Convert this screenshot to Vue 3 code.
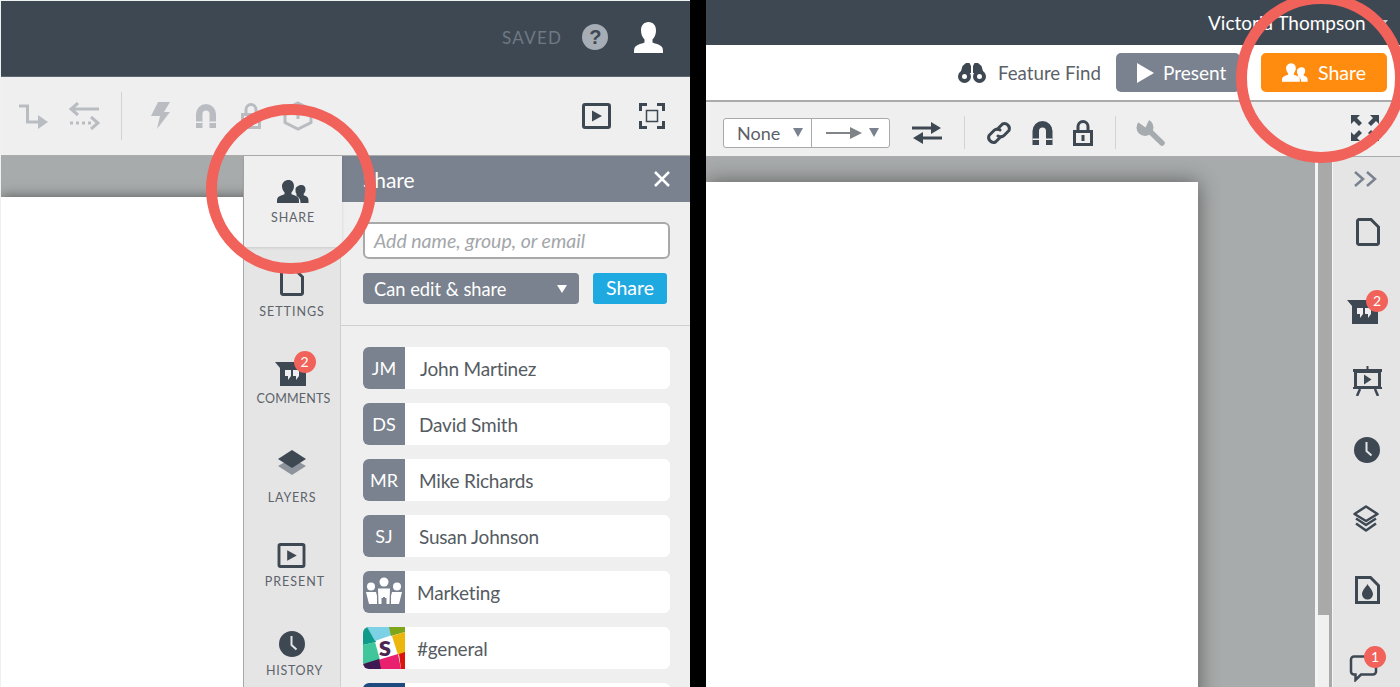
<script setup>
const tabs = [
  { key: 'settings', label: 'SETTINGS', icon: 'i-doc' },
  { key: 'comments', label: 'COMMENTS', icon: 'i-comment', badge: '2' },
  { key: 'layers', label: 'LAYERS', icon: 'i-layers-solid' },
  { key: 'present', label: 'PRESENT', icon: 'i-present' },
  { key: 'history', label: 'HISTORY', icon: 'i-clock' },
]
const people = [
  { kind: 'text', tag: 'JM', name: 'John Martinez', wide: true },
  { kind: 'text', tag: 'DS', name: 'David Smith' },
  { kind: 'text', tag: 'MR', name: 'Mike Richards' },
  { kind: 'text', tag: 'SJ', name: 'Susan Johnson' },
  { kind: 'team', name: 'Marketing' },
  { kind: 'slack', name: '#general' },
  { kind: 'blue', name: '' },
]
</script>

<template>
  <div class="root">
    <svg class="defs" aria-hidden="true">
      <symbol id="i-magnet" viewBox="0 0 20 24">
        <path d="M0 10a10 10 0 0 1 20 0v14h-6.500V10a3.500 3.500 0 0 0-7 0v14H0z" fill="currentColor"/>
        <path d="M0 17.500h6.500v1.500H0zM13.500 17.500H20v1.500h-6.500z" fill="#efefef"/>
      </symbol>
      <symbol id="i-lock" viewBox="0 0 20 26">
        <path d="M5 11V6.500a5 5 0 0 1 10 0V11" fill="none" stroke="currentColor" stroke-width="3"/>
        <rect x="1.500" y="11.500" width="17" height="13" fill="none" stroke="currentColor" stroke-width="3"/>
        <rect x="8.500" y="15" width="3" height="6" fill="currentColor"/>
      </symbol>
      <symbol id="i-present" viewBox="0 0 29 26">
        <rect x="1.500" y="1.500" width="26" height="23" rx="1.500" fill="none" stroke="currentColor" stroke-width="3"/>
        <path d="M10 7.500 20 13 10 18.500z" fill="currentColor"/>
      </symbol>
      <symbol id="i-clock" viewBox="0 0 26 26">
        <circle cx="13" cy="13" r="13" fill="currentColor"/>
        <path d="M12.500 5v9l5 4.500" fill="none" stroke="#e5e5e5" stroke-width="2"/>
      </symbol>
      <symbol id="i-doc" viewBox="0 0 24 28">
        <path d="M3 1.500h12l7.500 7.500v16a1.500 1.500 0 0 1-1.500 1.500H3A1.500 1.500 0 0 1 1.500 25V3A1.500 1.500 0 0 1 3 1.500z" fill="none" stroke="currentColor" stroke-width="3"/>
      </symbol>
      <symbol id="i-comment" viewBox="0 0 31 24">
        <path d="M0 0h31v24H5V6z" fill="currentColor"/>
        <path d="M10 8h6v6l-3 4v-4h-3zM18 8h6v6l-3 4v-4h-3z" fill="#efefef"/>
      </symbol>
      <symbol id="i-layers-solid" viewBox="0 0 28 25">
        <path d="M14 8 28 16 14 25 0 16z" fill="#8d949c"/>
        <path d="M14 0 28 9 14 18 0 9z" fill="currentColor"/>
      </symbol>
      <symbol id="i-people" viewBox="0 0 32 23">
        <path d="M11.500 0c3.600 0 5.500 2.700 5.500 6 0 2.800-1.200 5-2.500 6.300v2c2.500 1 6 2 7 3.700.5 1 .5 3 .5 5H0c0-2 0-4 .5-5 1-1.700 4.500-2.700 7-3.700v-2C6.200 11 5 8.800 5 6c0-3.300 2.900-6 6.500-6z" fill="currentColor"/>
        <path d="M24.500 5c2.500 0 4 1.900 4 4.300 0 2-.8 3.500-1.800 4.500v1.500c1.700.7 3.500 1.300 4.300 2.700.5.900.5 3 .5 5H23.500c0-3-.5-5-4-7V13.800c-1-1-1-2.500-1-4.500C18.500 6.900 22 5 24.500 5z" fill="currentColor"/>
      </symbol>
    </svg>

    <section class="pane pane-left">
      <header class="top-left">
        <span class="saved">SAVED</span>
        <span class="help">?</span>
        <svg class="user" viewBox="0 0 29 31"><path d="M14.500 0c4.600 0 7.500 3.500 7.500 8.500 0 3.800-1.500 7-3.500 9v3c3 1.300 7.500 2 9.500 4.500 1 1.200 1 4 1 6H0c0-2 0-4.800 1-6 2-2.500 6.500-3.200 9.500-4.500v-3c-2-2-3.500-5.200-3.500-9C7 3.500 9.900 0 14.500 0z" fill="#fff"/></svg>
      </header>

      <div class="tools-left">
        <svg class="ic t-route" viewBox="0 0 30 26"><path d="M1 3h8.500v16H21" fill="none" stroke="currentColor" stroke-width="3"/><path d="M20 12l10 7-10 7z" fill="currentColor"/></svg>
        <svg class="ic t-swap" viewBox="0 0 32 28"><path d="M31 7H3M10 1 3 7l7 6" fill="none" stroke="currentColor" stroke-width="3"/><path d="M2 21h22" fill="none" stroke="currentColor" stroke-width="3" stroke-dasharray="3 3"/><path d="M23 15l7 6-7 6" fill="none" stroke="currentColor" stroke-width="3"/></svg>
        <span class="sep s-left"></span>
        <svg class="ic t-bolt" viewBox="0 0 19 27"><path d="M7 0h12l-6 10h6L6 27l3-13H0z" fill="currentColor"/></svg>
        <svg class="ic t-mag"><use href="#i-magnet"/></svg>
        <svg class="ic t-lock"><use href="#i-lock"/></svg>
        <svg class="ic t-hex" viewBox="0 0 30 30"><path d="M15 2 28 8.500v13L15 28 2 21.500v-13z" fill="none" stroke="currentColor" stroke-width="3"/><path d="M15 8v10" stroke="currentColor" stroke-width="3"/></svg>
        <span class="spring"></span>
        <svg class="ic t-play"><use href="#i-present"/></svg>
        <svg class="ic t-focus" viewBox="0 0 26 26"><path d="M1.500 8V1.500H8M18 1.500h6.500V8M24.500 18v6.500H18M8 24.500H1.500V18" fill="none" stroke="currentColor" stroke-width="3"/><rect x="7.500" y="7.500" width="11" height="11" fill="none" stroke="currentColor" stroke-width="1.500"/></svg>
      </div>

      <div class="work-left">
        <div class="canvas-left">
          <div class="page-left"></div>
        </div>

        <nav class="side">
          <div class="tab tab-share">
            <svg class="tab-ic ic-people"><use href="#i-people"/></svg>
            <span class="tab-label">SHARE</span>
          </div>
          <div v-for="t in tabs" :key="t.key" class="tab" :class="'tab-' + t.key">
            <span class="tab-ic-wrap">
              <svg class="tab-ic"><use :href="'#' + t.icon"/></svg>
              <span v-if="t.badge" class="badge">{{ t.badge }}</span>
            </span>
            <span class="tab-label">{{ t.label }}</span>
          </div>
        </nav>

        <aside class="panel">
          <div class="panel-head">
            <span>Share</span>
            <svg class="close" viewBox="0 0 18 18"><path d="M2 2l14 14M16 2 2 16" stroke="#fff" stroke-width="2.500"/></svg>
          </div>
          <div class="form">
            <div class="input">Add name, group, or email</div>
            <div class="form-row">
              <div class="perm"><span>Can edit &amp; share</span><i class="caret-white"></i></div>
              <div class="share-btn">Share</div>
            </div>
          </div>
          <div class="list">
            <div v-for="p in people" :key="p.kind + p.name" class="person">
              <div class="avatar" :class="'av-' + p.kind">
                <template v-if="p.kind === 'text'">{{ p.tag }}</template>
                <svg v-else-if="p.kind === 'team'" class="av-svg" viewBox="0 0 42 42">
                  <g fill="#fff">
                    <circle cx="8" cy="15.500" r="4"/><circle cx="21" cy="11" r="4.500"/><circle cx="34" cy="15.500" r="4"/>
                    <path d="M3 21h10l1 4v8H6zM15 17.500h12l-.5 15.500h-3v-6h-1.500v-1h-2v1h-1.500v6h-3zM29 21h10l-3 12h-8v-8z"/>
                  </g>
                </svg>
                <svg v-else-if="p.kind === 'slack'" class="av-svg" viewBox="0 0 42 42">
                  <rect width="42" height="42" fill="#fff"/>
                  <path d="M0 0h8l5 15L0 18z" fill="#0e9b8a"/>
                  <path d="M4 0h23l2 8-17 6z" fill="#7cd2e4"/>
                  <path d="M26 0h16v5l-14 4z" fill="#7ea51a"/>
                  <path d="M29 9 42 5v21l-7 2z" fill="#ecb60c"/>
                  <path d="M0 18l12-3 5 18L0 37z" fill="#41c69b"/>
                  <path d="M15 33l20-6 3 15H17z" fill="#e8206d"/>
                  <path d="M36 27l6-2v17h-4z" fill="#d9150d"/>
                  <path d="M0 37l16-5 2 10H0z" fill="#3e1a52"/>
                  <text x="22" y="29" text-anchor="middle" class="slack-s">s</text>
                </svg>
              </div>
              <span class="person-name" :class="{ 'name-wide': p.wide }">{{ p.name }}</span>
            </div>
          </div>
        </aside>
      </div>
      <div class="ring ring-left"></div>
    </section>

    <div class="gutter"></div>

    <section class="pane pane-right">
      <header class="top-right">
        <span class="account">Victoria Thompson</span>
        <i class="caret-account"></i>
      </header>

      <div class="bar-white">
        <svg class="binoc" viewBox="0 0 28 20"><path d="M8 0h3.500l1.500 3v7H2.500L4.500 3zM16.500 0H20l3.500 3 2 7H15V3z" fill="#3e4853"/><circle cx="6.500" cy="13.500" r="4.500" fill="#fff" stroke="#3e4853" stroke-width="4"/><circle cx="21.500" cy="13.500" r="4.500" fill="#fff" stroke="#3e4853" stroke-width="4"/></svg>
        <span class="feature">Feature Find</span>
        <div class="btn-present">
          <svg class="play" viewBox="0 0 17 20"><path d="M0 0 17 10 0 20z" fill="#fff"/></svg>
          <span>Present</span>
        </div>
        <div class="btn-share">
          <svg class="btn-people"><use href="#i-people"/></svg>
          <span>Share</span>
        </div>
      </div>

      <div class="bar-grey">
        <div class="selects">
          <div class="sel sel-none"><span>None</span><i class="caret-grey"></i></div>
          <div class="sel sel-arrow">
            <svg class="line-arrow" viewBox="0 0 36 12"><path d="M0 6h24" stroke="#808488" stroke-width="2"/><path d="M24 0l12 6-12 6z" fill="#808488"/></svg>
            <i class="caret-grey"></i>
          </div>
        </div>
        <svg class="ic r-swap" viewBox="0 0 30 22"><path d="M0 6h20" stroke="currentColor" stroke-width="3"/><path d="M19 0l10 6-10 6zM11 10 1 16l10 6z" fill="currentColor"/><path d="M10 16h20" stroke="currentColor" stroke-width="3"/></svg>
        <span class="sep s-r1"></span>
        <svg class="ic r-link" viewBox="0 0 26 26"><path d="M11 9.500l5.500-5.500a5 5 0 0 1 6.500 6.500l-5 5c-2 2-4 2-6 .5M15 16.500l-5.500 5.500a5 5 0 0 1-6.500-6.500l5-5c2-2 4-2 6-.5" fill="none" stroke="currentColor" stroke-width="3" stroke-linecap="round"/></svg>
        <svg class="ic r-mag"><use href="#i-magnet"/></svg>
        <svg class="ic r-lock"><use href="#i-lock"/></svg>
        <span class="sep s-r2"></span>
        <svg class="ic r-wrench" viewBox="0 0 29 27"><path d="M12 10.500 26 24" fill="none" stroke="#a6abaf" stroke-width="5.500" stroke-linecap="round"/><circle cx="9" cy="8.500" r="8.500" fill="#a6abaf"/><path d="M-1 1 9.500 8.500 14-1z" fill="#efefef"/></svg>
        <span class="spring"></span>
        <svg class="ic r-expand" viewBox="0 0 30 28">
          <path d="M1 1h9L7 4l5 5-3 3-5-5-3 3zM29 1h-9l3 3-5 5 3 3 5-5 3 3z" fill="currentColor"/>
          <path d="M1 27h9l-3-3 5-5-3-3-5 5-3-3zM29 27h-9l3-3-5-5 3-3 5 5 3-3z" fill="currentColor"/>
        </svg>
      </div>

      <div class="work-right">
        <div class="canvas-right">
          <div class="page-right"></div>
        </div>
        <div class="scroll"><div class="thumb"></div></div>
        <nav class="rail">
          <svg class="chev" viewBox="0 0 24 18"><path d="M2 2l8 7-8 7M14 2l8 7-8 7" fill="none" stroke="#79828e" stroke-width="2.500"/></svg>
          <svg class="rail-ic ri-doc"><use href="#i-doc"/></svg>
          <span class="rail-badge-wrap rw-comment">
            <svg class="rail-ic ri-comment"><use href="#i-comment"/></svg>
            <span class="badge">2</span>
          </span>
          <svg class="rail-ic ri-board" viewBox="0 0 29 30"><path d="M13.500 0h2v3H29v3h-1v15h1v2H0v-2h1V6H0V3h13.500z" fill="currentColor"/><rect x="4" y="7" width="21" height="13" fill="#e5e5e5"/><path d="M11 8.500l7.500 5-7.500 5z" fill="currentColor"/><path d="M7 23 4 30M22 23l3 7" stroke="currentColor" stroke-width="2.500"/></svg>
          <svg class="rail-ic ri-clock"><use href="#i-clock"/></svg>
          <svg class="rail-ic ri-layers" viewBox="0 0 26 28"><g fill="none" stroke="currentColor" stroke-width="2.500" stroke-linejoin="round"><path d="M13 1.500 24.500 9 13 16 1.500 9z"/><path d="M3 13.500 13 20l10-6.500M3 18.500 13 25.500l10-7"/></g></svg>
          <svg class="rail-ic ri-fill" viewBox="0 0 25 28"><path d="M1.500 1.500h14l8 8v17h-22z" fill="none" stroke="currentColor" stroke-width="3"/><path d="M12.500 8c1.500 3 5.500 6.500 5.500 10a5.500 5.500 0 0 1-11 0c0-3.500 4-7 5.500-10z" fill="currentColor"/></svg>
          <span class="rail-badge-wrap rw-chat">
            <svg class="rail-ic ri-chat" viewBox="0 0 29 27"><path d="M5 1.500h19a3 3 0 0 1 3 3v12a3 3 0 0 1-3 3H12l-5.500 5.500v-5.500H5a3 3 0 0 1-3-3v-12a3 3 0 0 1 3-3z" fill="none" stroke="currentColor" stroke-width="2.500"/></svg>
            <span class="badge">1</span>
          </span>
        </nav>
      </div>
      <div class="ring ring-right"></div>
    </section>
  </div>
</template>

<style>
html, body { margin: 0; background: #000; overflow: hidden; }
</style>

<style scoped>
.root {
  width: 1400px; height: 687px; display: flex; overflow: hidden; position: relative;
  font-family: Lato, "Open Sans", sans-serif; color: #555b62; background: #000;
}
.defs { position: absolute; width: 0; height: 0; }
.pane { height: 687px; display: flex; flex-direction: column; position: relative; overflow: hidden; box-sizing: border-box; }
.pane-left { width: 690px; border-top: 1px solid #eef0f1; border-left: 1px solid #eef0f1; }
.pane-right { width: 694px; }
.gutter { width: 16px; background: #000; }
.ic { color: #b9bdc2; flex: none; display: block; }
.spring { flex: 1; }
.sep { width: 1px; flex: none; background: #d2d3d4; }

.top-left { height: 76px; box-sizing: border-box; padding-bottom: 3px; background: #3e4853; display: flex; align-items: center; flex: none; border-bottom: 1px solid #5d6671; }
.saved { margin-left: 501px; font-size: 17px; letter-spacing: 1.300px; color: #6f7985; }
.help { margin-left: 20px; width: 26px; height: 26px; border-radius: 50%; background: #a6adb5; color: #3e4853; font: bold 20px/26px "Liberation Sans", sans-serif; text-align: center; }
.user { margin-left: 26px; width: 29px; height: 31px; }

.tools-left { height: 77px; padding-bottom: 1px; background: #efefef; border-bottom: 1px solid #acacac; display: flex; align-items: center; flex: none; box-sizing: content-box; }
.t-route { width: 30px; height: 26px; margin-left: 17px; }
.t-swap { width: 32px; height: 28px; margin-left: 20px; }
.s-left { height: 48px; margin-left: 21px; }
.t-bolt { width: 19px; height: 27px; margin-left: 29px; }
.t-mag { width: 20px; height: 24px; margin-left: 26px; }
.t-lock { width: 20px; height: 26px; margin-left: 25px; }
.t-hex { width: 30px; height: 30px; margin-left: 22px; }
.t-play { width: 29px; height: 26px; color: #3e4853; }
.t-focus { width: 26px; height: 26px; margin-left: 28px; margin-right: 25px; color: #3e4853; }

.work-left { flex: 1; display: flex; min-height: 0; }
.canvas-left { width: 242px; background: #a8abab; overflow: hidden; padding-top: 41px; flex: none; box-sizing: border-box; }
.page-left { height: 500px; width: 260px; background: #fff; box-shadow: 0 0 12px rgba(0,0,0,.5); }

.side { width: 98px; flex: none; background: #e5e5e5; border-left: 1px solid #a9a9a9; border-right: 1px solid #cfcfcf; box-sizing: border-box; display: flex; flex-direction: column; }
.tab { display: flex; flex-direction: column; align-items: center; box-sizing: border-box; flex: none; color: #3e4853; }
.tab-label { font-size: 12.500px; line-height: 16px; letter-spacing: 1px; color: #5d636a; }
.tab-ic-wrap { position: relative; display: block; }
.tab-ic { display: block; }
.tab-share { height: 91px; padding-top: 23px; background: #efefef; width: 98px; box-shadow: 0 1px 3px rgba(0,0,0,.12); position: relative; }
.tab-share .tab-ic { width: 32px; height: 25px; margin-bottom: 6px; }
.tab-share .tab-label { letter-spacing: .8px; }
.tab-settings { height: 88px; padding-top: 21px; }
.tab-settings .tab-ic { width: 24px; height: 28px; margin-bottom: 8px; }
.tab-comments { height: 90px; padding-top: 27px; }
.tab-comments .tab-ic { width: 31px; height: 24px; margin-bottom: 5px; }
.tab-comments .tab-ic-wrap { margin-right: 4px; }
.tab-comments .tab-label { margin-left: 3px; letter-spacing: .2px; }
.tab-layers { height: 90px; padding-top: 25px; }
.tab-layers .tab-ic { width: 28px; height: 25px; margin-bottom: 15px; }
.tab-layers .tab-label { letter-spacing: .8px; }
.tab-present { height: 90px; padding-top: 28px; }
.tab-present .tab-ic { width: 29px; height: 25px; margin-bottom: 6px; }
.tab-present .tab-label { margin-left: 6px; }
.tab-present .tab-ic-wrap { margin-right: 2px; }
.tab-history { padding-top: 26px; }
.tab-history .tab-ic { width: 26px; height: 26px; margin-bottom: 6px; }
.tab-history .tab-label { margin-left: 5px; letter-spacing: .7px; }
.badge { position: absolute; width: 22px; height: 22px; border-radius: 50%; background: #f0625a; color: #fff; font-size: 14px; line-height: 22px; text-align: center; }
.tab-ic-wrap .badge { left: 19px; top: -11px; }

.panel { width: 349px; flex: none; background: #efefef; display: flex; flex-direction: column; }
.panel-head { height: 46px; flex: none; background: #79828e; color: #fff; font-size: 21px; display: flex; align-items: center; justify-content: space-between; padding: 0 19px 0 22px; box-sizing: border-box; }
.close { width: 18px; height: 18px; }
.form { padding: 20px 20px 21px 22px; border-bottom: 1px solid #cfcfcf; flex: none; }
.input { height: 37px; box-sizing: border-box; border: 2px solid #a9a9a9; border-radius: 6px; background: #fff; font-size: 19.500px; font-style: italic; line-height: 33px; padding-left: 9px; color: #a3a6a9; }
.form-row { display: flex; margin-top: 14px; gap: 14px; }
.perm { width: 216px; height: 31px; background: #79828e; border-radius: 4px; color: #fff; font-size: 18.300px; line-height: 30px; padding: 0 11px; box-sizing: border-box; display: flex; justify-content: space-between; align-items: center; }
.caret-white { width: 0; height: 0; border: 5.500px solid transparent; border-top: 8px solid #fff; border-bottom: 0; margin-right: 1px; }
.share-btn { width: 74px; height: 31px; background: #1fa9e1; border-radius: 3px; color: #fff; font-size: 19.500px; line-height: 30px; text-align: center; }

.list { padding: 21px 20px 0 22px; display: flex; flex-direction: column; gap: 14px; }
.person { height: 42px; flex: none; display: flex; align-items: center; background: #fff; border-radius: 6px; overflow: hidden; }
.avatar { width: 42px; height: 42px; flex: none; background: #79828e; color: #fff; font-size: 18px; line-height: 42px; text-align: center; }
.av-svg { display: block; width: 42px; height: 42px; }
.av-blue { background: #1f4a80; }
.slack-s { font: 900 28px Lato, sans-serif; fill: #4a2650; }
.person-name { margin-left: 14px; font-size: 19px; letter-spacing: -.2px; color: #555b62; }
.name-wide { margin-left: 15px; }
.av-team + .person-name, .av-slack + .person-name { margin-left: 12px; }

.ring { position: absolute; width: 170px; height: 170px; box-sizing: border-box; border-radius: 50%; border: 11px solid #f0625a; pointer-events: none; }
.ring-left { left: 205px; top: 103px; }
.ring-right { left: 530px; top: -7px; }

.top-right { height: 45px; flex: none; background: #3e4853; display: flex; align-items: center; }
.account { margin-left: 502px; color: #fff; font-size: 19px; }
.caret-account { margin-left: 14px; border: 4px solid transparent; border-top: 5px solid #c8ccd0; border-bottom: 0; width: 0; height: 0; }
.bar-white { height: 55px; flex: none; background: #fff; border-bottom: 2px solid #a9abac; box-sizing: content-box; display: flex; align-items: center; }
.binoc { width: 28px; height: 20px; margin-left: 252px; flex: none; }
.feature { margin-left: 12px; font-size: 18.700px; color: #5b6168; width: 106px; white-space: nowrap; }
.btn-present { margin-left: 12px; width: 124px; height: 39px; background: #79828e; border-radius: 5px; color: #fff; font-size: 19px; display: flex; align-items: center; box-sizing: border-box; padding-left: 21px; }
.play { width: 17px; height: 20px; margin-right: 9px; }
.btn-share { margin-left: 21px; width: 126px; height: 39px; background: #ff8c0f; border-radius: 5px; color: #fff; font-size: 19.500px; display: flex; align-items: center; box-sizing: border-box; padding-left: 21px; }
.btn-people { width: 26px; height: 19px; margin-right: 10px; color: #fff; }

.bar-grey { height: 47px; padding-top: 7px; flex: none; background: #efefef; border-bottom: 1px solid #a9abac; display: flex; align-items: center; box-sizing: content-box; color: #3e4853; }
.bar-grey .ic { color: #3e4853; }
.selects { margin-left: 17px; display: flex; height: 30px; width: 167px; background: #fff; border: 1px solid #a9a9a9; border-radius: 3px; box-sizing: border-box; flex: none; }
.sel { display: flex; align-items: center; box-sizing: border-box; }
.sel-none { width: 88px; border-right: 1px solid #a9a9a9; padding-left: 13px; font-size: 18px; color: #5b6168; }
.sel-none .caret-grey { margin-left: 13px; }
.sel-arrow { flex: 1; padding-left: 14px; }
.line-arrow { width: 36px; height: 12px; margin-right: 7px; }
.caret-grey { width: 0; height: 0; border: 5.500px solid transparent; border-top: 9px solid #79828e; border-bottom: 0; }
.r-swap { width: 30px; height: 22px; margin-left: 22px; }
.s-r1 { height: 33px; margin-left: 22px; }
.r-link { width: 26px; height: 26px; margin-left: 21px; }
.r-mag { width: 21px; height: 24px; margin-left: 20px; }
.r-lock { width: 20px; height: 26px; margin-left: 20px; }
.s-r2 { height: 33px; margin-left: 22px; }
.bar-grey .r-wrench { width: 29px; height: 27px; margin-left: 20px; color: #a6abaf; }
.r-expand { width: 30px; height: 28px; margin-right: 20px; margin-top: -10px; }

.work-right { flex: 1; display: flex; min-height: 0; }
.canvas-right { width: 609px; flex: none; background: #a8abab; padding-top: 25px; overflow: hidden; border-right: 3px solid #f4f4f4; box-sizing: content-box; padding-bottom: 0; }
.page-right { width: 492px; height: 560px; background: #fff; box-shadow: 0 0 20px rgba(0,0,0,.45); }
.scroll { width: 11px; flex: none; background: #f0f0f0; }
.thumb { height: 458px; background: #a9a9a9; }
.rail { flex: 1; background: #e5e5e5; border-left: 3px solid #a9a9a9; box-shadow: inset 1px 0 0 #f4f4f4; position: relative; display: flex; flex-direction: column; color: #3e4853; box-sizing: border-box; }
.chev { width: 24px; height: 18px; margin: 13px 0 0 21px; flex: none; display: block; }
.rail-ic { display: block; flex: none; color: #3e4853; }
.ri-doc { width: 24px; height: 28px; margin: 30px 0 0 24px; }
.rail-badge-wrap { position: relative; display: block; flex: none; }
.rw-comment { margin: 54px 0 0 15px; width: 31px; height: 24px; }
.ri-comment { width: 31px; height: 24px; }
.rw-comment .badge { left: 19px; top: -10px; }
.ri-board { width: 29px; height: 30px; margin: 42px 0 0 21px; }
.ri-clock { width: 26px; height: 26px; margin: 41px 0 0 22px; }
.ri-layers { width: 26px; height: 28px; margin: 42px 0 0 21px; }
.ri-fill { width: 25px; height: 28px; margin: 43px 0 0 23px; }
.rw-chat { margin: 51px 0 0 17px; width: 29px; height: 27px; }
.ri-chat { width: 29px; height: 27px; }
.rw-chat .badge { left: 15px; top: -9px; }
</style>
